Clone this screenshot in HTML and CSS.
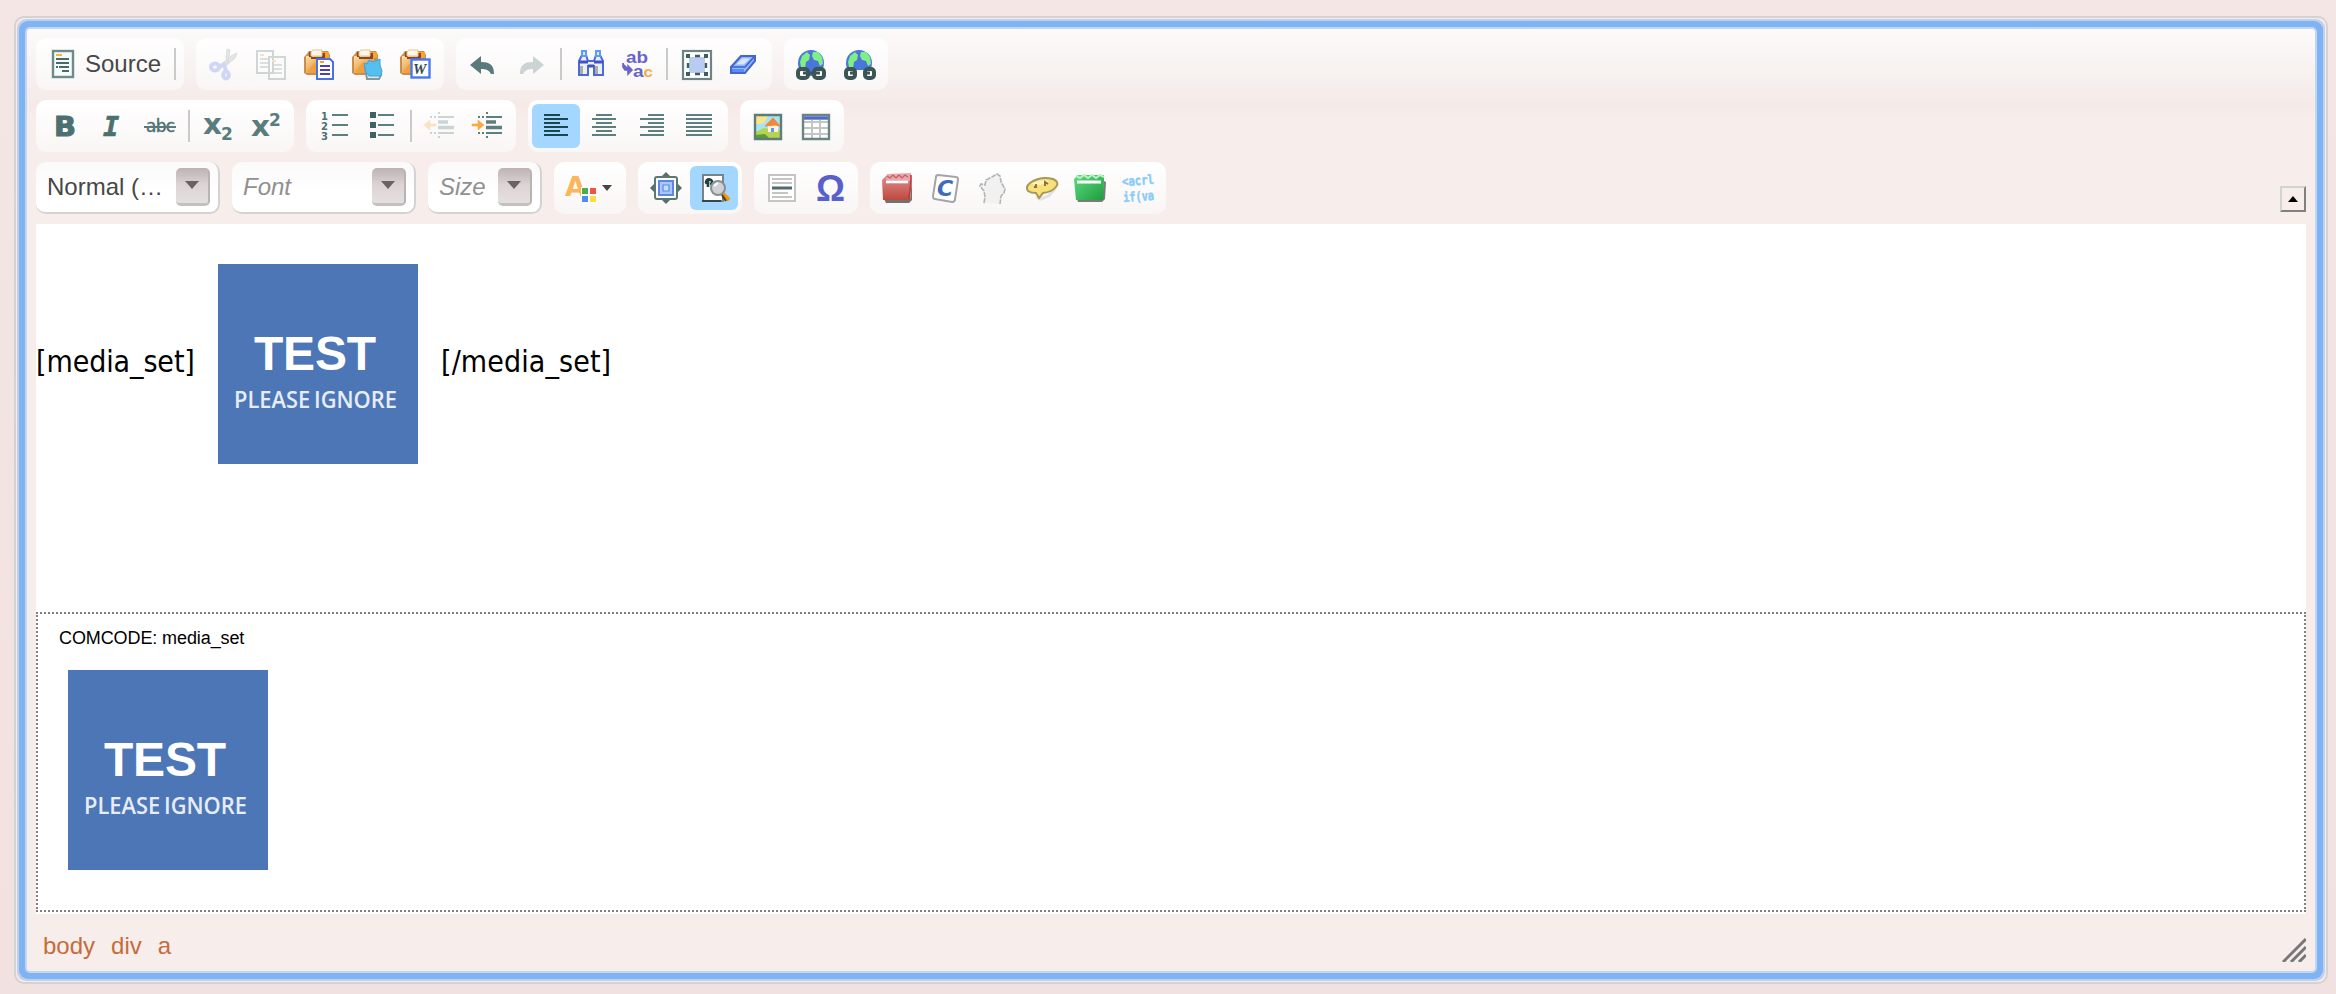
FILE: index.html
```html
<!DOCTYPE html>
<html lang="en">
<head>
  <meta charset="UTF-8" />
  <meta name="viewport" content="width=device-width, initial-scale=1.0" />
  <title>Editor</title>
  <link rel="stylesheet" href="styles.css">
</head>
<body>
  <!-- shapes used by more than one icon -->
  <svg class="defs" width="0" height="0">
    <defs>
      <linearGradient id="wood" x1="0" y1="0" x2="1" y2="1">
        <stop offset="0" stop-color="#fce0a4" /><stop offset="1" stop-color="#d97a1c" />
      </linearGradient>
      <linearGradient id="redbook" x1="0" y1="0" x2="0" y2="1">
        <stop offset="0" stop-color="#e08c92" /><stop offset="1" stop-color="#bd4a3c" />
      </linearGradient>
      <linearGradient id="greenbook" x1="0" y1="0" x2="1" y2="1">
        <stop offset="0" stop-color="#5fdc7e" /><stop offset="1" stop-color="#1f9c40" />
      </linearGradient>
      <g id="clipboard">
        <path d="M2 7l3-4h19l2 4v18l-3 2H3l-3-2V9z" fill="#c98d4e" />
        <path d="M2 8h20v17H2z" fill="url(#wood)" />
        <path d="M3 24l8-10 2 11z" fill="#f0a13c" />
        <path d="M18 4h7v6h-7z" fill="#f5a32e" />
        <path d="M5 4h3v5H5zM18 5h3v6h-3zM7 9h12v2H7z" fill="#8a4528" />
        <path d="M9 2h9v6H7V4z" fill="#fff7ea" stroke="#e9c188" stroke-width="1" />
      </g>
      <g id="globe">
        <circle cx="15" cy="15" r="13" fill="#4876dc" />
        <path d="M4 14l2-6 5-4 3 3-1 5-3 2-1 6-4-1zM17 4l5 0 4 5 1 7-3 2-2-5-4-1-2-4z" fill="#7fee84" />
      </g>
    </defs>
  </svg>

  <div class="editor">
    <div class="inner">
      <div class="top">
        <div class="row">
          <div class="group">
            <a class="btn source">
              <svg class="icon" viewBox="0 0 32 32"><rect x="5" y="3" width="20" height="26" fill="#f7fafa" stroke="#6c8b8b" stroke-width="2.4" /><path d="M8 7h6" stroke="#fbb040" stroke-width="2" /><path d="M8 11h13M8 15h13M11 19h10M8 19h2M14 23h7" stroke="#476a6a" stroke-width="2" /></svg>
              <span>Source</span>
            </a>
            <i class="sep"></i>
          </div>
          <div class="group">
            <a class="btn off"><svg class="icon" viewBox="0 0 32 32"><path d="M19 1l-1 12-3 6 5-4 2-13zM29 5l-6 3-8 10 5-2 7-6z" fill="#aeb4b5" stroke="#8b9091" stroke-width="1" /><ellipse cx="7" cy="19" rx="4" ry="3.5" fill="none" stroke="#6c8af0" stroke-width="4" /><ellipse cx="18" cy="27" rx="2.8" ry="3.5" fill="none" stroke="#6c8af0" stroke-width="4" /><path d="M10 20l6-4 2 7" fill="none" stroke="#6c8af0" stroke-width="4" /></svg></a>
            <a class="btn off"><svg class="icon" viewBox="0 0 32 32"><g fill="#fff" stroke="#6b8484" stroke-width="2"><path d="M1 3h16v22H1zM13 9h16v22H13z" /><path d="M4 11h8M4 15h8M4 19h8M16 17h10M16 21h10M16 25h10" stroke-width="1.6" /></g><path d="M4 7h4M16 13h4" stroke="#fba030" stroke-width="2" /></svg></a>
            <a class="btn"><svg class="icon" viewBox="0 0 32 32"><use href="#clipboard" /><path d="M13 11h13l3 3v17H13z" fill="#fff" stroke="#4a70e6" stroke-width="2" /><path d="M16 14h4" stroke="#fba030" stroke-width="2" /><path d="M16 18h10M16 22h10M16 26h10" stroke="#4840b8" stroke-width="2" /></svg></a>
            <a class="btn"><svg class="icon" viewBox="0 0 32 32"><use href="#clipboard" /><path d="M13 20l2 11h12l2-4z" fill="#dfe8ea" stroke="#84999c" stroke-width="2" /><path d="M12 15l3 1 2-4 4 2 7-3v6l2 6-1 5H17l-3-4z" fill="#55bfee" stroke="#3fa4db" stroke-width="1" /></svg></a>
            <a class="btn"><svg class="icon" viewBox="0 0 32 32"><use href="#clipboard" /><rect x="11.5" y="11.5" width="18" height="18" fill="#fff" stroke="#4a78f0" stroke-width="2.4" /><text class="w" x="13" y="26">W</text></svg></a>
          </div>
          <div class="group">
            <a class="btn"><svg class="icon" viewBox="0 0 32 32"><path d="M2 17l11-9v6c9 0 13 3 13 12h-3c-2-4-5-5-10-5v5z" fill="#5b7a7c" /></svg></a>
            <a class="btn off"><svg class="icon" viewBox="0 0 32 32"><path d="M28 17L17 8v6C8 14 4 17 4 26h3c2-4 5-5 10-5v5z" fill="#5b7a7c" /></svg></a>
            <i class="sep"></i>
            <a class="btn"><svg class="icon" viewBox="0 0 32 32"><path d="M5 13l3-6h4l2 6h6l2-6h4l3 6v14h-9v-9h-6v9H5z" fill="#e9effb" stroke="#4a6ad8" stroke-width="2" /><path d="M8 3h4v5H8zM22 3h4v5h-4z" fill="#dbe9ff" stroke="#5d9cf5" stroke-width="2" /><path d="M5 14h9M20 14h9M14 18h6" stroke="#4550c4" stroke-width="3" /><path d="M6 18h3v8H6zM21 18h3v8h-3z" fill="#a9ada4" /></svg></a>
            <a class="btn"><svg class="icon" viewBox="0 0 32 32"><text class="ab" x="4" y="15" textLength="22" lengthAdjust="spacingAndGlyphs">ab</text><text class="ab" x="11" y="29" textLength="20" lengthAdjust="spacingAndGlyphs">a<tspan class="c">c</tspan></text><path d="M1 15v4l2 3h5M6 18v8l4-4z" fill="#6864c8" stroke="#6864c8" stroke-width="1.6" /></svg></a>
            <i class="sep"></i>
            <a class="btn"><svg class="icon" viewBox="0 0 32 32"><rect x="3" y="3" width="28" height="28" fill="#fff" stroke="#6e8484" stroke-width="2.2" /><path d="M9 9h16v16H9z" fill="#b8ccf2" /><path d="M15 8h5M15 26h5M8 15v5M26 15v5" stroke="#3f5c5e" stroke-width="2.4" /><path d="M6 6h4v4H6zM24 6h4v4h-4zM6 24h4v4H6zM24 24h4v4h-4z" fill="#3f5c5e" /></svg></a>
            <a class="btn"><svg class="icon" viewBox="0 0 32 32"><path d="M3 19L13 8h14v5L17 25H3z" fill="#8db9f5" stroke="#4464d2" stroke-width="2" /><path d="M4 19h13l9-10" fill="none" stroke="#3d60d0" stroke-width="1.6" /><path d="M8 16.5l6-6h8l-6 6z" fill="#d5e6fd" /><path d="M4 21h12v3H4z" fill="#5d8dee" /></svg></a>
          </div>
          <div class="group">
            <a class="btn"><svg class="icon" viewBox="0 0 32 32"><use href="#globe" /><g fill="#fff" stroke="#3c5556" stroke-width="4"><rect x="2" y="21" width="10" height="9" rx="3" /><rect x="18" y="21" width="10" height="9" rx="3" /></g><path d="M7 25h17" stroke="#3c5556" stroke-width="3" /></svg></a>
            <a class="btn"><svg class="icon" viewBox="0 0 32 32"><use href="#globe" /><path d="M12 22h8v10h-8z" fill="#fff" /><g fill="#fff" stroke="#3c5556" stroke-width="4"><rect x="2" y="21" width="9" height="9" rx="3" /><rect x="21" y="21" width="9" height="9" rx="3" /></g><path d="M6 25h6M20 25h6" stroke="#3c5556" stroke-width="3" /></svg></a>
          </div>
        </div>

        <div class="row">
          <div class="group">
            <a class="btn"><svg class="icon" viewBox="0 0 32 32"><text class="bold" x="6" y="26" textLength="22" lengthAdjust="spacingAndGlyphs">B</text></svg></a>
            <a class="btn"><svg class="icon" viewBox="0 0 32 32"><text class="italic" x="7" y="26">I</text></svg></a>
            <a class="btn"><svg class="icon" viewBox="0 0 32 32"><text class="strike" x="2" y="22" textLength="29">abc</text><path d="M0 17h32" stroke="#5b7a7c" stroke-width="2" /></svg></a>
            <i class="sep"></i>
            <a class="btn"><svg class="icon" viewBox="0 0 32 32"><text class="x" x="1" y="24" textLength="19" lengthAdjust="spacingAndGlyphs">x</text><text class="small" x="19" y="30">2</text></svg></a>
            <a class="btn"><svg class="icon" viewBox="0 0 32 32"><text class="x" x="1" y="26" textLength="19" lengthAdjust="spacingAndGlyphs">x</text><text class="small" x="19" y="16">2</text></svg></a>
          </div>
          <div class="group">
            <a class="btn"><svg class="icon" viewBox="0 0 32 32"><g class="num"><text x="3" y="10">1</text><text x="3" y="20">2</text><text x="3" y="30">3</text></g><path d="M14 5h16M14 15h16M14 25h16" class="line" /></svg></a>
            <a class="btn"><svg class="icon" viewBox="0 0 32 32"><path d="M4 2h6v6H4zM4 12h6v6H4zM4 22h6v6H4z" fill="#3f6264" /><path d="M12 5h16M12 15h16M12 25h16" class="line" /></svg></a>
            <i class="sep"></i>
            <a class="btn off"><svg class="icon" viewBox="0 0 32 32"><path d="M0 15l6-5v4h6v2H6v4z" fill="#fba840" stroke="#fba840" stroke-width=".6" /><path d="M14 7h16M14 23h16" class="line" /><path d="M14 12h10M14 17.5h16" class="line thick" /><path d="M6 7h2M10 7h2M6 23h2M10 23h2M14 3h2M14 27h2" class="line" /></svg></a>
            <a class="btn"><svg class="icon" viewBox="0 0 32 32"><path d="M12 15l-6-5v4H0v2h6v4z" fill="#fba840" stroke="#fba840" stroke-width=".6" /><path d="M14 7h16M14 23h16" class="line" /><path d="M14 12h10M14 17.5h16" class="line thick" /><path d="M6 7h2M10 7h2M6 23h2M10 23h2M14 3h2M14 27h2" class="line" /></svg></a>
          </div>
          <div class="group">
            <a class="btn on"><svg class="icon" viewBox="0 0 32 32"><path d="M4 5h16M4 9h24M4 13h16M4 17h24M4 21h16M4 25h24" class="line dark" /></svg></a>
            <a class="btn"><svg class="icon" viewBox="0 0 32 32"><path d="M8 5h16M4 9h24M8 13h16M4 17h24M8 21h16M4 25h24" class="line" /></svg></a>
            <a class="btn"><svg class="icon" viewBox="0 0 32 32"><path d="M12 5h16M4 9h24M12 13h16M4 17h24M12 21h16M4 25h24" class="line" /></svg></a>
            <a class="btn"><svg class="icon" viewBox="0 0 32 32"><path d="M2 5h26M2 9h26M2 13h26M2 17h26M2 21h26M2 25h26" class="line" /></svg></a>
          </div>
          <div class="group">
            <a class="btn"><svg class="icon" viewBox="0 0 32 32"><path d="M3 5h26v24H3z" fill="#a5e4f2" /><path d="M4 6h12l-3 6-4 2H4z" fill="#fce588" /><path d="M4 22l8-4 16 2v8H4z" fill="#b6d34f" /><path d="M4 25l9-1 4 4H4z" fill="#5a9b35" /><path d="M16 15h10v7H16z" fill="#fff0e0" /><path d="M13 16l8-8 7 8-5-1z" fill="#f08a3a" stroke="#f08a3a" /><path d="M19 18h3v4h-3z" fill="#5d9ce8" /><path d="M3 5h26v24H3z" fill="none" stroke="#5d7c7a" stroke-width="2.4" /></svg></a>
            <a class="btn"><svg class="icon" viewBox="0 0 32 32"><path d="M3 5h26v24H3z" fill="#fff" /><path d="M4 12h24M4 18h24M4 24h24M12 10v18M20 10v18" stroke="#c2c4c6" stroke-width="2" /><path d="M4 8h24" stroke="#4b69cf" stroke-width="3.4" /><path d="M3 5h26v24H3z" fill="none" stroke="#6c8484" stroke-width="2.4" /></svg></a>
          </div>
        </div>

        <div class="row">
          <div class="combo"><span class="value">Normal (…</span><i class="drop"></i></div>
          <div class="combo"><span class="hint">Font</span><i class="drop"></i></div>
          <div class="combo size"><span class="hint">Size</span><i class="drop"></i></div>
          <div class="group">
            <a class="btn color">
              <svg class="icon" viewBox="0 0 32 32"><text class="fontcolor" x="-1" y="24">A</text><path d="M15 15h17v17H15z" fill="#fcfbfb" /><path d="M16 16h6v6h-6z" fill="#47b04b" /><path d="M24 16h6v6h-6z" fill="#f4514b" /><path d="M16 24h6v6h-6z" fill="#4d8cf5" /><path d="M24 24h6v6h-6z" fill="#fddc42" /></svg>
              <i class="caret"></i>
            </a>
          </div>
          <div class="group">
            <a class="btn"><svg class="icon" viewBox="0 0 32 32"><path d="M16 0l4 4h-8zM16 32l4-4h-8zM0 16l4-4v8zM32 16l-4-4v8z" fill="#54706f" /><rect x="5" y="5" width="22" height="22" rx="2" fill="#fff" stroke="#5b7877" stroke-width="2" /><path d="M9 9h14v14H9z" fill="#a9c9fa" stroke="#5b86ec" stroke-width="2" /><path d="M13 13h6v6h-6z" fill="#c9defc" stroke="#5687ec" stroke-width="1.2" /></svg></a>
            <a class="btn on"><svg class="icon" viewBox="0 0 32 32"><path d="M5 3h20v26H5z" fill="#fff" stroke="#78838a" stroke-width="2" /><path d="M4 28h19v2H4z" fill="#2f4a52" /><path d="M10 15v-5q-2 2-2 0 1-4 5-2 3 3-1 4" fill="none" stroke="#233f43" stroke-width="2.6" /><circle cx="20" cy="16" r="7" fill="#ccd2d6" stroke="#878f94" stroke-width="2" /><path d="M16 14l4-3" stroke="#fff" stroke-width="2" /><path d="M25 22l6 6" stroke="#f3920b" stroke-width="4" /><path d="M24 23l4 6" stroke="#463a22" stroke-width="2" /></svg></a>
          </div>
          <div class="group">
            <a class="btn"><svg class="icon" viewBox="0 0 32 32"><path d="M3 3h26v26H3z" fill="#fff" stroke="#c4c6c6" stroke-width="2" /><path d="M6 7h20M6 11h20M6 21h16M6 25h20" stroke="#c4c6c6" stroke-width="2" /><path d="M6 16h20" stroke="#4e6c6c" stroke-width="3" /></svg></a>
            <a class="btn"><svg class="icon" viewBox="0 0 32 32"><text class="omega" x="2" y="29" textLength="29" lengthAdjust="spacingAndGlyphs">Ω</text></svg></a>
          </div>
          <div class="group">
            <a class="btn"><svg class="icon" viewBox="0 0 32 32"><path d="M2 27l26 1 2-20v20l-3 3H4z" fill="#75706e" /><path d="M0 8l5-5h24v5l-1 20H1z" fill="url(#redbook)" /><path d="M5 2l24-1v6l-2 2H4z" fill="#e7a7ac" /><path d="M4 10h22" stroke="#fff" stroke-width="2.6" /><path d="M5 4l3 2 3-3 3 3 3-3 3 3 3-3 3 2" fill="none" stroke="#c85a62" stroke-width="1.2" /><path d="M29 3v7l-2 17" fill="none" stroke="#bc3a35" stroke-width="1.6" /></svg></a>
            <a class="btn"><svg class="icon" viewBox="0 0 32 32"><path d="M8 3l18 2q2 0 2 3l-3 19q0 3-3 3L5 27q-2 0-2-3L6 5q0-2 2-2z" fill="#fff" stroke="#a2a5a8" stroke-width="2" /><text class="c-logo" x="7" y="24">C</text></svg></a>
            <a class="btn"><svg class="icon" viewBox="0 0 32 32"><path d="M6 31l1-6-1-6-4-5 1-2 4 1 1-5 6-3 5-3 3 2 1 6 4 7-1 4-3 3-1 8z" fill="#f1f1f1" /><path d="M6 31l1-6-1-6-4-5 1-2 4 1 1-5 6-3 5-3 3 2 1 6 4 7-1 4-3 3-1 8" fill="none" stroke="#b4b4b4" stroke-width="1.6" stroke-dasharray="5 1" /></svg></a>
            <a class="btn"><svg class="icon" viewBox="0 0 32 32"><path d="M9 25l10-1 10-7 1 1-6 7-10 4z" fill="#e3e3e1" /><path d="M2 19Q-1 15 4 11 14 4 27 7q7 3 3 8-4 5-13 6l-4 5-3-5q-5 0-8-2z" fill="#f8df78" stroke="#a6975a" stroke-width="2" /><path d="M5 12q8-5 18-3l-8 4z" fill="#fff3bd" /><path d="M8 15h2v-3M19 14v-4l3 2" fill="none" stroke="#7d6e43" stroke-width="1.8" /></svg></a>
            <a class="btn"><svg class="icon" viewBox="0 0 32 32"><path d="M3 27h25l2-18 2 1-1 17-3 3H4z" fill="#777c78" /><path d="M0 7l4-4h26v7l-1 18H2z" fill="url(#greenbook)" /><path d="M3 10h24" stroke="#fff" stroke-width="3" /><path d="M2 4l4 2 4-3 4 3 4-3 4 3 4-3 4 2" fill="none" stroke="#b7f1c4" stroke-width="2" /></svg></a>
            <a class="btn"><svg class="icon" viewBox="0 0 32 32"><g class="code"><text x="0" y="13" textLength="32" lengthAdjust="spacingAndGlyphs" transform="rotate(-4 16 10)">&lt;acrl</text><text x="1" y="29" textLength="31" lengthAdjust="spacingAndGlyphs" transform="rotate(-4 16 24)">if(va</text></g></svg></a>
          </div>
          <a class="collapser"><i></i></a>
        </div>
      </div>

      <div class="contents">
        <div class="wysiwyg">
          <span>[media_set]</span>
          <svg class="thumb" viewBox="0 0 200 200"><rect width="200" height="200" fill="#4c76b6" /><text class="test" x="36" y="105.5" textLength="122">TEST</text><text class="ignore" x="16" y="144" textLength="163" lengthAdjust="spacingAndGlyphs">PLEASE IGNORE</text></svg>
          <span class="close">[/media_set]</span>
        </div>
        <div class="comcode">
          <div class="label">COMCODE: media_set</div>
          <svg class="thumb" viewBox="0 0 200 200"><rect width="200" height="200" fill="#4c76b6" /><text class="test" x="36" y="105.5" textLength="122">TEST</text><text class="ignore" x="16" y="144" textLength="163" lengthAdjust="spacingAndGlyphs">PLEASE IGNORE</text></svg>
        </div>
      </div>

      <div class="bottom">
        <div class="path"><a>body</a><a>div</a><a>a</a></div>
        <svg class="resizer" viewBox="0 0 24 24"><path d="M1 24L24 1M9 24L24 9M17 24l7-7" stroke="#777" stroke-width="3" /></svg>
      </div>
    </div>
  </div>
</body>
</html>
```
FILE: styles.css
```css
* {
  box-sizing: border-box;
}
body {
  margin: 0;
  height: 994px;
  padding: 16px 8px 10px 14px;
  background: linear-gradient(#f4e6e5, #f1e1e1);
  font-family: "Liberation Sans", Arial, sans-serif;
  font-size: 24px;
  color: #474747;
  overflow: hidden;
}
.defs {
  position: absolute;
}
.editor {
  height: 968px;
  padding: 11px;
  border: 2px solid #d3d3d3;
  border-radius: 10px;
  background: #f6ecea;
}
/* focus ring */
.inner {
  height: 942px;
  padding: 9px;
  border-radius: 3px;
  background: linear-gradient(#fcfafa 0, #f8f3f1 36px, #f5eae8 76px, #f7edeb 90px);
  box-shadow: 0 0 0 2px #c3d5f1, 0 0 0 8px #7eb3f4, 0 0 0 10px #c3cfe9;
}
.row {
  display: flex;
  gap: 12px;
  margin-bottom: 10px;
}
.group {
  display: flex;
  align-items: center;
  height: 52px;
  padding: 4px;
  border-radius: 10px;
  background: linear-gradient(#fff, #f9f6f5);
}
.btn {
  display: flex;
  align-items: center;
  width: 48px;
  height: 44px;
  padding: 0 8px;
  border-radius: 6px;
}
.btn.on {
  background: #a3d7ff;
}
.btn.off .icon {
  opacity: .3;
}
.btn.source {
  width: 130px;
  gap: 5px;
}
.btn.color {
  width: 64px;
  gap: 4px;
}
.icon {
  width: 32px;
  height: 32px;
  flex: none;
  overflow: visible;
}
.sep {
  width: 2px;
  height: 32px;
  margin: 0 4px;
  background: #cacaca;
}
.caret {
  border: 5px solid transparent;
  border-top: 6px solid #474747;
  border-bottom: 0;
}

/* combos */
.combo {
  display: flex;
  justify-content: space-between;
  width: 184px;
  height: 52px;
  padding: 6px 8px 6px 11px;
  border-right: 2px solid #d3d3d3;
  border-bottom: 2px solid #d3d3d3;
  border-radius: 10px;
  background: linear-gradient(#fbf9f9, #fff 60%);
  line-height: 37px;
}
.combo.size {
  width: 114px;
}
.hint {
  font-style: italic;
  color: #909090;
}
.drop {
  display: flex;
  align-items: center;
  justify-content: center;
  width: 34px;
  height: 38px;
  padding-bottom: 1px;
  border-radius: 5px;
  border-right: 2px solid #bab3b3;
  border-bottom: 3px solid #c6bfbf;
  background: linear-gradient(#bdb3b3, #ddd5d5 50%, #e6dfdf);
}
.drop::after {
  content: "";
  border: 7px solid transparent;
  border-top: 8px solid #686464;
  border-bottom: 0;
}
.collapser {
  display: flex;
  align-items: center;
  justify-content: center;
  align-self: flex-end;
  width: 26px;
  height: 26px;
  margin-left: auto;
  margin-bottom: 2px;
  border: 2px solid;
  border-color: #d3d3d3 #808080 #808080 #d3d3d3;
}
.collapser i {
  border: 5px solid transparent;
  border-bottom: 6px solid #000;
  border-top: 0;
}

/* icon lettering */
.line {
  fill: none;
  stroke: #5e7f80;
  stroke-width: 2;
}
.line.thick {
  stroke-width: 3.4;
}
.line.dark {
  stroke: #18474f;
}
.bold, .italic, .strike, .x, .small, .num {
  font-family: "DejaVu Sans", sans-serif;
  font-weight: bold;
  fill: #4c7070;
}
.bold {
  font-size: 27px;
  stroke: #4c7070;
}
.italic {
  font: italic bold 27px "DejaVu Sans Mono", monospace;
  stroke: #4c7070;
  stroke-width: .6;
}
.strike {
  font-size: 17px;
  font-weight: normal;
  stroke: #4c7070;
  stroke-width: .4;
}
.x {
  font-size: 29px;
}
.x, .small {
  fill: #5a7c7c;
}
.small {
  font-size: 17px;
}
.num {
  font-size: 10px;
}
.ab {
  font: bold 17px "Liberation Sans", Arial, sans-serif;
  fill: #6864c8;
}
.ab .c {
  font-size: 15px;
  fill: #fbaa48;
}
.w {
  font: italic bold 15px "Liberation Serif", serif;
  fill: #33494b;
}
.fontcolor {
  font: bold 27px "DejaVu Sans", sans-serif;
  fill: #fbb65c;
}
.omega {
  font: bold 36px "Liberation Sans", Arial, sans-serif;
  fill: #5860cc;
}
.c-logo {
  font: italic bold 22px "DejaVu Sans", sans-serif;
  fill: #3e6cb8;
}
.code {
  font: bold 13px "DejaVu Sans Mono", monospace;
  fill: #8accf6;
}
.code text {
  stroke: #8accf6;
  stroke-width: .5;
}

/* editing area */
.contents {
  height: 690px;
  background: #fff;
}
.wysiwyg {
  display: flex;
  align-items: center;
  height: 388px;
  padding: 40px 0 148px;
  font-family: "DejaVu Sans Condensed", "DejaVu Sans", sans-serif;
  font-stretch: condensed;
  font-size: 30px;
  color: #000;
}
.wysiwyg span {
  width: 182px;
  letter-spacing: -.1px;
  line-height: 40px;
  margin-top: -4px;
}
.wysiwyg .close {
  margin-left: 23px;
  letter-spacing: .1px;
}
.thumb {
  display: block;
  width: 200px;
  height: 200px;
}
.test {
  font: bold 48px "Liberation Sans", Arial, sans-serif;
  fill: #fff;
}
.ignore {
  font: 600 23px "Open Sans", sans-serif;
  word-spacing: -2px;
  fill: #e6edf8;
}
.comcode {
  height: 300px;
  padding: 14px 21px;
  border: 2px dotted #808080;
}
.comcode .label {
  height: 42px;
  font-size: 18px;
  letter-spacing: -.1px;
  line-height: 20px;
  color: #000;
}
.comcode .thumb {
  margin-left: 9px;
}
.bottom {
  display: flex;
  justify-content: space-between;
  padding: 18px 0 0 7px;
}
.path {
  display: flex;
  gap: 16px;
  line-height: 28px;
  color: #c46c3c;
}
.resizer {
  width: 24px;
  height: 24px;
  margin-top: 6px;
}
```
